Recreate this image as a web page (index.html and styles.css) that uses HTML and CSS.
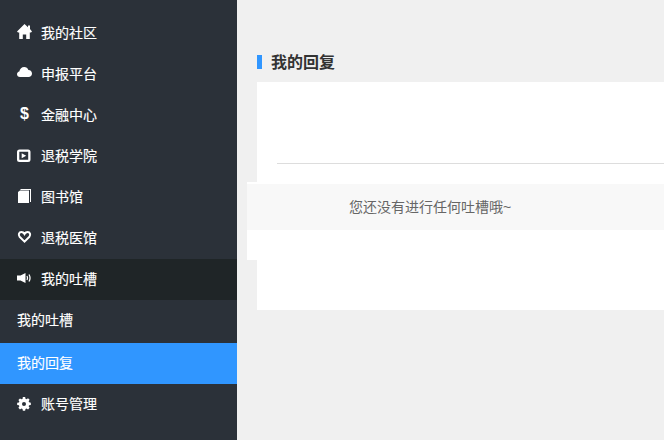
FILE: index.html
```html
<!DOCTYPE html>
<html lang="zh-CN">
<head>
<meta charset="utf-8">
<title>我的回复</title>
<link rel="stylesheet" href="styles.css">
</head>
<body>
<div class="page">
  <nav class="sidebar">
    <a class="item"><svg class="icon" viewBox="0 0 16 16"><path d="M7.500 0 11 3.200V1.500h2V5l2 2.500-1 1h-1.200V15H9.200v-4.500H5.800V15H2.200V8.500H1l-1-1z"/></svg><span>我的社区</span></a>
    <a class="item"><svg class="icon" viewBox="0 0 16 16"><path d="M3 12C1.200 12 0 10.800 0 9.200 0 7.800 1 6.700 2.300 6.500 2.800 3.800 4.800 2 7.200 2c2 0 3.600 1.200 4.200 3C13.600 5 15 6.700 15 8.600c0 2-1.500 3.400-3.400 3.400z"/></svg><span>申报平台</span></a>
    <a class="item"><svg class="icon" viewBox="0 0 16 16"><text class="dollar" x="7.500" y="13.400" text-anchor="middle">$</text></svg><span>金融中心</span></a>
    <a class="item"><svg class="icon" viewBox="0 0 16 16"><path fill-rule="evenodd" d="M2.500 2.500h8.500A2.500 2.500 0 0 1 13.500 5v7.500a2.500 2.500 0 0 1-2.500 2.500H2.500A2.500 2.500 0 0 1 0 12.500V5A2.500 2.500 0 0 1 2.500 2.500zM2.300 4.700v8h8.900v-8H2.300z"/><path d="M4.700 6.200v5l4.500-2.500z"/></svg><span>退税学院</span></a>
    <a class="item"><svg class="icon" viewBox="0 0 16 16"><path d="M1 4l2-1.500h9V15H1z"/><path d="M3.500 1H14v13h-1V2H3.500z"/></svg><span>图书馆</span></a>
    <a class="item"><svg class="icon" viewBox="0 0 16 16"><path class="line heart" d="M7.500 12.600 2.600 7.700C1 6 2 3 4.400 3 5.700 3 6.800 3.800 7.500 5 8.200 3.800 9.300 3 10.600 3 13 3 14 6 12.400 7.700z"/></svg><span>退税医馆</span></a>
    <a class="item current"><svg class="icon" viewBox="0 0 16 16"><path d="M0 5.500h3.500L8.500 3v10l-5-2.500H0z"/><path class="line wave" d="M10 6c.7 1.200.7 2.800 0 4M12 4.500c1.300 2.200 1.300 4.800 0 7"/></svg><span>我的吐槽</span></a>
    <a class="item sub first">我的吐槽</a>
    <a class="item sub active">我的回复</a>
    <a class="item"><svg class="icon" viewBox="0 0 16 16"><path transform="translate(0 2) scale(.875)" fill-rule="evenodd" d="M6.700 0h2.600l.4 2 1.200.5 1.700-1.100 1.800 1.800-1.100 1.700.5 1.200 2 .4v2.600l-2 .4-.5 1.200 1.100 1.700-1.800 1.800-1.700-1.100-1.200.5-.4 2H6.700l-.4-2-1.200-.5-1.700 1.100-1.800-1.800 1.100-1.700-.5-1.200-2-.4V6.700l2-.4.5-1.200-1.100-1.700 1.800-1.800 1.700 1.100 1.200-.5zM8 5.700a2.300 2.300 0 1 0 0 4.600 2.300 2.300 0 0 0 0-4.600z"/></svg><span>账号管理</span></a>
  </nav>
  <main class="main">
    <h2 class="title">我的回复</h2>
    <section class="card">
      <div class="tabs"></div>
      <div class="empty">
        <p class="empty-text">您还没有进行任何吐槽哦~</p>
      </div>
    </section>
  </main>
</div>
</body>
</html>
```

FILE: styles.css
```css
* { box-sizing: border-box; }
html, body { margin: 0; height: 100%; overflow: hidden; }
body { font-family: "Liberation Sans", "Noto Sans CJK SC", sans-serif; background: #f0f0f0; }
.page { display: flex; width: 664px; height: 440px; overflow: hidden; }
.sidebar { flex: 0 0 237px; background: #2b3139; padding-top: 13px; }
.item { display: flex; align-items: center; height: 41px; padding: 0 0 2px 17px; color: #fff; font-size: 14px; line-height: 20px; -webkit-text-stroke: .15px #fff; }
.icon { flex: 0 0 16px; width: 16px; height: 16px; margin: 0 8px 1px 0; fill: #fff; }
.line { fill: none; stroke: #fff; }
.heart { stroke-width: 2; }
.wave { stroke-width: 1.300; }
.dollar { font-family: "Liberation Sans", sans-serif; font-size: 16px; font-weight: 700; fill: #fff; }
.current { background: #1f2527; }
.sub.first { margin-bottom: 2px; }
.active { background: #3096ff; }
.main { flex: 1; min-width: 0; padding: 51px 0 0 20px; }
.title { margin: 0; height: 22px; display: flex; align-items: center; padding: 2px 0 0 14px; font-size: 16px; font-weight: 700; color: #333; line-height: 22px; position: relative; }
.title::before { content: ""; position: absolute; left: 0; top: 4px; width: 5px; height: 14px; background: #3096ff; }
.card { width: 600px; height: 228px; margin-top: 9px; background: #fff; padding-left: 20px; }
.tabs { height: 82px; border-bottom: 1px solid #ddd; }
.empty { width: 600px; height: 78px; margin: 18px 0 0 -30px; padding-top: 2px; background: #fff; }
.empty-text { margin: 0; height: 46px; line-height: 46px; padding-left: 102px; background: #f8f8f8; color: #666; font-size: 14px; }
```
